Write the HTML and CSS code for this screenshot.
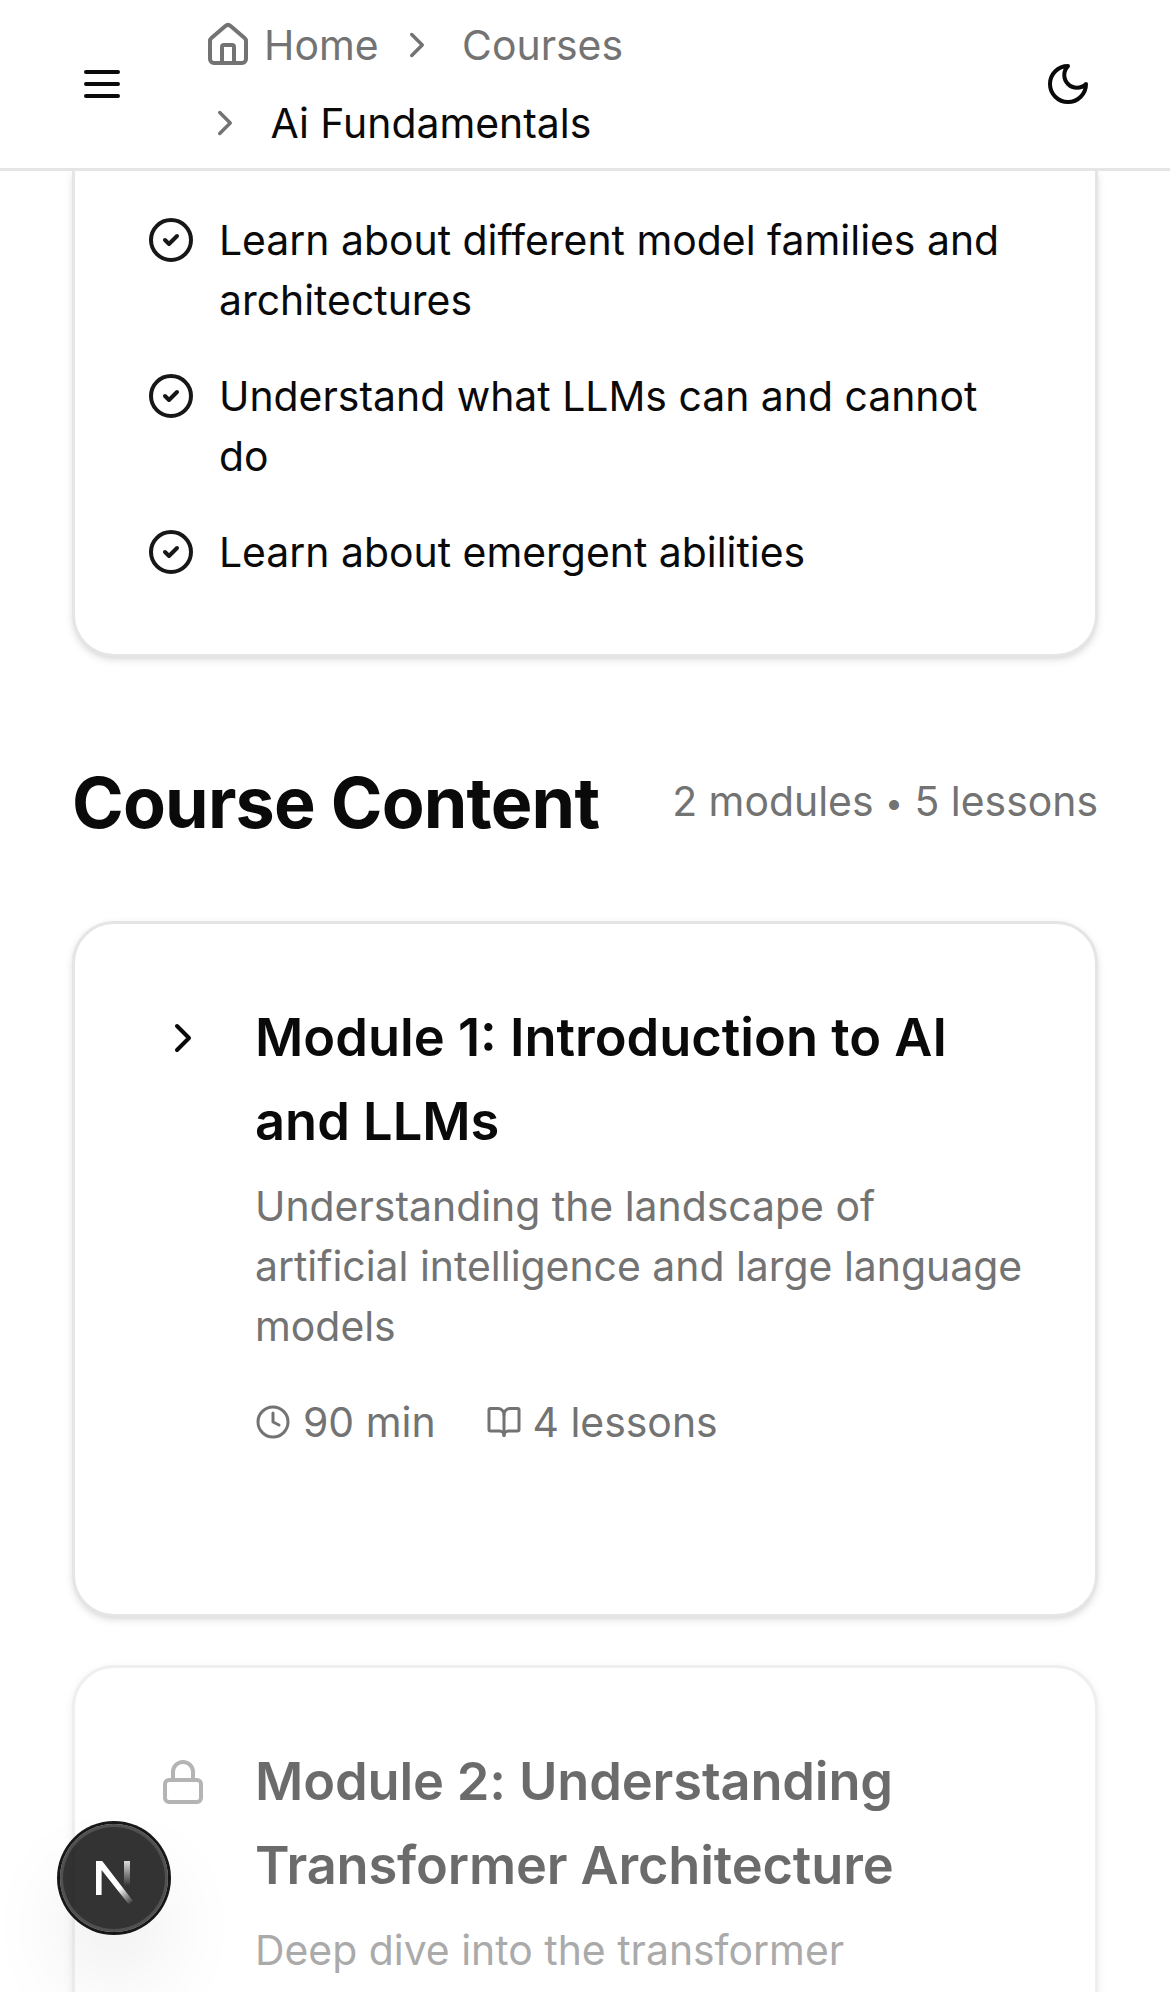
FILE: index.html
```html
<!DOCTYPE html>
<html lang="en">
<head>
<meta charset="utf-8">
<title>Ai Fundamentals</title>
<link rel="stylesheet" href="styles.css">
</head>
<body>
<header class="topbar">
  <button class="icon-button" aria-label="Menu">
    <svg class="icon" viewBox="0 0 24 24"><path d="M4 6h16M4 12h16M4 18h16"/></svg>
  </button>
  <nav class="breadcrumb">
    <div class="crumb-row">
      <a class="crumb home"><svg class="icon" viewBox="0 0 24 24"><path d="M15 21v-8a1 1 0 0 0-1-1h-4a1 1 0 0 0-1 1v8"/><path d="M3 10a2 2 0 0 1 .709-1.528l7-5.999a2 2 0 0 1 2.582 0l7 5.999A2 2 0 0 1 21 10v9a2 2 0 0 1-2 2H5a2 2 0 0 1-2-2z"/></svg><span>Home</span></a>
      <svg class="icon separator" viewBox="0 0 24 24"><path d="m9 18 6-6-6-6"/></svg>
      <a class="crumb">Courses</a>
    </div>
    <div class="crumb-row">
      <svg class="icon separator" viewBox="0 0 24 24"><path d="m9 18 6-6-6-6"/></svg>
      <span class="crumb current">Ai Fundamentals</span>
    </div>
  </nav>
  <button class="icon-button" aria-label="Toggle theme">
    <svg class="icon" viewBox="0 0 24 24"><path d="M12 3a6 6 0 0 0 9 9 9 9 0 1 1-9-9Z"/></svg>
  </button>
</header>

<main class="page">
  <section class="card objectives">
    <ul class="objective-list">
      <li class="objective"><svg class="icon" viewBox="0 0 24 24"><circle cx="12" cy="12" r="10"/><path d="m9 12 2 2 4-4"/></svg><span>Learn about different model families and<br>architectures</span></li>
      <li class="objective"><svg class="icon" viewBox="0 0 24 24"><circle cx="12" cy="12" r="10"/><path d="m9 12 2 2 4-4"/></svg><span>Understand what LLMs can and cannot<br>do</span></li>
      <li class="objective"><svg class="icon" viewBox="0 0 24 24"><circle cx="12" cy="12" r="10"/><path d="m9 12 2 2 4-4"/></svg><span>Learn about emergent abilities</span></li>
    </ul>
  </section>

  <div class="section-head">
    <h1 class="section-title">Course Content</h1>
    <p class="section-meta">2 modules <span class="dot">•</span> 5 lessons</p>
  </div>

  <div class="modules">
    <section class="card module">
      <div class="module-toggle"><svg class="icon" viewBox="0 0 24 24"><path d="m9 18 6-6-6-6"/></svg></div>
      <div class="module-body">
        <h2 class="module-title">Module 1: Introduction to AI<br>and LLMs</h2>
        <p class="module-text">Understanding the landscape of<br>artificial intelligence and large language<br>models</p>
        <div class="module-stats">
          <span class="stat"><svg class="icon stat-icon" viewBox="0 0 24 24"><circle cx="12" cy="12" r="10"/><path d="M12 6v6l4 2"/></svg>90 min</span>
          <span class="stat"><svg class="icon stat-icon" viewBox="0 0 24 24"><path d="M12 7v14"/><path d="M3 18a1 1 0 0 1-1-1V4a1 1 0 0 1 1-1h5a4 4 0 0 1 4 4 4 4 0 0 1 4-4h5a1 1 0 0 1 1 1v13a1 1 0 0 1-1 1h-6a3 3 0 0 0-3 3 3 3 0 0 0-3-3z"/></svg>4 lessons</span>
        </div>
      </div>
    </section>

    <section class="card module locked">
      <div class="module-toggle"><svg class="icon" viewBox="0 0 24 24"><rect x="3" y="11" width="18" height="11" rx="2"/><path d="M7 11V7a5 5 0 0 1 10 0v4"/></svg></div>
      <div class="module-body">
        <h2 class="module-title">Module 2: Understanding<br>Transformer Architecture</h2>
        <p class="module-text">Deep dive into the transformer</p>
      </div>
    </section>
  </div>
</main>

<div class="dev-badge">
  <svg class="dev-mark" viewBox="0 0 108 108">
    <defs>
      <linearGradient id="diagonal" gradientUnits="userSpaceOnUse" x1="60" y1="64" x2="72" y2="80"><stop stop-color="#fff"/><stop offset="0.6" stop-color="#fff" stop-opacity="0.4"/><stop offset="1" stop-color="#fff" stop-opacity="0"/></linearGradient>
      <linearGradient id="stem" gradientUnits="userSpaceOnUse" x1="67" y1="35" x2="67" y2="62"><stop stop-color="#fff" stop-opacity="0.9"/><stop offset="1" stop-color="#fff" stop-opacity="0"/></linearGradient>
    </defs>
    <path d="M36 37h6.2L73 77l-4.4 3.2L41.6 46v25H36z" fill="url(#diagonal)"/>
    <path d="M64 37h6v26h-6z" fill="url(#stem)"/>
  </svg>
</div>
</body>
</html>
```
FILE: styles.css
```css
* { box-sizing: border-box; margin: 0; padding: 0; }

body {
  height: 1992px;
  overflow: hidden;
  background: #fff;
  color: #0a0a0a;
  font: 400 40.9px/60px Inter, "Liberation Sans", sans-serif;
}

.icon {
  display: block;
  flex: none;
  width: 48px;
  height: 48px;
  fill: none;
  stroke: currentColor;
  stroke-width: 2;
  stroke-linecap: round;
  stroke-linejoin: round;
}

.topbar {
  display: flex;
  align-items: center;
  height: 171px;
  padding: 0 48px;
  border-bottom: 3px solid #e5e5e5;
}

.icon-button {
  display: flex;
  flex: none;
  align-items: center;
  justify-content: center;
  width: 108px;
  height: 108px;
  border: 0;
  background: none;
  color: #0a0a0a;
}

.breadcrumb {
  display: flex;
  flex: 1;
  flex-direction: column;
  gap: 18px;
  padding-left: 48px;
}

.crumb-row { display: flex; align-items: center; color: #737373; }
.crumb { white-space: nowrap; }
.home { display: flex; align-items: center; gap: 12px; margin-right: 17px; }
.separator { width: 42px; height: 42px; margin-right: 24.5px; }
.current { color: #0a0a0a; }

.page {
  height: 1821px;
  padding: 0 72px;
  overflow: hidden;
}

.card {
  border: 3px solid #e5e5e5;
  border-radius: 42px;
  background: #fff;
  box-shadow: 0 3px 9px rgba(0, 0, 0, 0.1), 0 3px 6px -3px rgba(0, 0, 0, 0.1);
}

.objectives {
  padding: 39px 69px 72px 72px;
  border-top: 0;
  border-radius: 0 0 42px 42px;
  clip-path: inset(0 -30px -30px);
}

.objective-list { display: flex; flex-direction: column; gap: 36px; list-style: none; }
.objective { display: flex; gap: 24px; white-space: nowrap; }
.objective .icon { margin-top: 6px; color: #171717; }

.section-head {
  display: flex;
  align-items: center;
  justify-content: space-between;
  height: 96px;
  margin: 96px 0 72px;
}

.section-title {
  padding-top: 4px;
  font-size: 70px;
  line-height: 96px;
  font-weight: 700;
  letter-spacing: -0.8px;
  white-space: nowrap;
}

.section-meta { color: #737373; white-space: nowrap; }
.dot { font-size: 32px; line-height: 1; vertical-align: 2px; }

.modules { display: flex; flex-direction: column; gap: 48px; }

.module { display: flex; gap: 36px; height: 696px; padding: 72px 0 0 72px; }

.module-toggle {
  display: flex;
  flex: none;
  align-items: center;
  justify-content: center;
  width: 72px;
  height: 72px;
  margin-top: 6px;
}

.module-body { white-space: nowrap; }
.module-title { margin-top: -1px; font-size: 52.4px; line-height: 84px; font-weight: 600; }
.module-text { margin-top: 13px; color: #737373; }
.module-stats { display: flex; gap: 50px; margin-top: 36px; color: #737373; }
.stat { display: flex; align-items: center; gap: 12px; }
.stat + .stat { gap: 11px; }
.stat-icon { width: 36px; height: 36px; }

.locked { opacity: 0.6; }
.locked .module-toggle { opacity: 0.5; }
.locked .module-title { letter-spacing: -0.15px; }

.dev-badge {
  position: fixed;
  left: 60px;
  top: 1824px;
  width: 108px;
  height: 108px;
  border-radius: 50%;
  background: rgba(0, 0, 0, 0.8);
  box-shadow: 0 0 0 3px #171717, inset 0 0 0 3px rgba(255, 255, 255, 0.14), 0 48px 96px -24px rgba(0, 0, 0, 0.24);
}

.dev-mark { display: block; width: 108px; height: 108px; }
```
